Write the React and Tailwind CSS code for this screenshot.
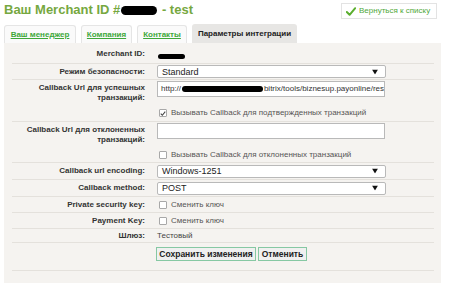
import React from 'react';

const Blob = ({ className }) => (
  <span className={`inline-block bg-black rounded-full ${className}`} />
);

const Arrow = () => (
  <svg width="6" height="5" viewBox="0 0 6 5" className="absolute right-[7px] top-1/2 -translate-y-1/2">
    <path d="M0 0 L6 0 L3 5 Z" fill="#111" />
  </svg>
);

const Select = ({ value }) => (
  <div className="relative w-[229px] h-[13px] bg-white border border-[#b9b9b9] rounded-[2px] pl-[4px] flex items-center text-[9px] leading-[10px] text-[#222]">
    {value}
    <Arrow />
  </div>
);

const Check = ({ checked, label }) => (
  <div className="flex items-center gap-[4px] pl-[2px] text-[8px] leading-[10px] text-[#555]">
    <span className="w-[8px] h-[8px] border border-[#a8a8a8] rounded-[1px] bg-white flex items-center justify-center">
      {checked && (
        <svg width="7" height="7" viewBox="0 0 8 8">
          <path d="M1 4.2 L3.1 6.3 L7 1.5" stroke="#444" strokeWidth="1.4" fill="none" />
        </svg>
      )}
    </span>
    <span>{label}</span>
  </div>
);

const Row = ({ label, h, children, align = 'items-center', pad = '' }) => (
  <div className={`grid grid-cols-[133px_1fr] gap-x-[12px] border-b border-[#e4e1dc] leading-[10px] ${h} ${align}`}>
    <div className={`text-right text-[8px] font-bold text-[#333] leading-[10px] ${pad}`}>{label}</div>
    <div className={align === 'items-start' ? 'pt-[1px]' : ''}>{children}</div>
  </div>
);

const tabs = [
  { name: 'Ваш менеджер', w: 'w-[72px]' },
  { name: 'Компания', w: 'w-[51px]' },
  { name: 'Контакты', w: 'w-[50px]' },
];

export default function App() {
  return (
    <div className="w-[450px] h-[293px] bg-white overflow-hidden font-['Liberation_Sans',Arial,sans-serif]">
      <div className="flex justify-between items-start h-[24px] pl-[4px] pr-[13px]">
        <h1 className="text-[13px] font-bold text-[#76a83f] leading-[16px] pt-[2px] flex items-center">
          Ваш Merchant ID #
          <Blob className="w-[36px] h-[9px] mx-[1px]" />
          &nbsp;- test
        </h1>
        <div className="mt-[3px] w-[96px] h-[16px] bg-white border border-[#e3e3e3] flex items-center gap-[3px] pl-[4px] text-[8px] text-[#4fa83a]">
          <svg width="10" height="9" viewBox="0 0 10 9">
            <path d="M0.8 5 L3.6 7.8 L9.2 1.2" stroke="#5aae2e" strokeWidth="2" fill="none" strokeLinecap="round" strokeLinejoin="round" />
          </svg>
          Вернуться к списку
        </div>
      </div>

      <div className="flex gap-[5px] pl-[4px] h-[19px] items-end">
        {tabs.map(t => (
          <div key={t.name} className={`${t.w} h-[18px] bg-[#fafafa] border border-b-0 border-[#e5e5e5] rounded-t-[3px] flex items-center justify-center text-[8px] font-bold text-[#3ea83a] underline`}>
            {t.name}
          </div>
        ))}
        <div className="w-[105px] h-[19px] bg-[#e7e6e4] rounded-t-[3px] flex items-center justify-center text-[8px] font-bold text-[#222]">
          Параметры интеграции
        </div>
      </div>

      <div className="ml-[4px] w-[437px] h-[240px] bg-[#f5f3f0] pt-[2px] pl-[8px] pr-[7px]">
        <Row label="Merchant ID:" h="h-[19px]">
          <Blob className="w-[27px] h-[5px] ml-[1px] mt-[1px]" />
        </Row>
        <Row label="Режим безопасности:" h="h-[16px]">
          <Select value="Standard" />
        </Row>
        <Row label={<>Callback Url для успешных<br />транзакций:</>} h="h-[42px]" align="items-start" pad="pt-[3px]">
          <div className="w-[228px] h-[16px] bg-white border border-[#b9b9b9] pl-[3px] flex items-center text-[8px] text-[#333] overflow-hidden whitespace-nowrap">
            http://
            <Blob className="w-[84px] h-[6px] rounded-[2px] mx-[1px]" />
            bitrix/tools/biznesup.payonline/res
          </div>
          <div className="mt-[11px]">
            <Check checked label="Вызывать Callback для подтвержденных транзакций" />
          </div>
        </Row>
        <Row label={<>Callback Url для отклоненных<br />транзакций:</>} h="h-[41px]" align="items-start" pad="pt-[3px]">
          <div className="w-[228px] h-[16px] bg-white border border-[#b9b9b9]" />
          <div className="mt-[11px]">
            <Check label="Вызывать Callback для отклоненных транзакций" />
          </div>
        </Row>
        <Row label="Callback url encoding:" h="h-[17px]">
          <Select value="Windows-1251" />
        </Row>
        <Row label="Callback method:" h="h-[17px]">
          <Select value="POST" />
        </Row>
        <Row label="Private security key:" h="h-[16px]">
          <Check label="Сменить ключ" />
        </Row>
        <Row label="Payment Key:" h="h-[16px]">
          <Check label="Сменить ключ" />
        </Row>
        <Row label="Шлюз:" h="h-[14px]">
          <div className="text-[8px] leading-[10px] text-[#444]">Тестовый</div>
        </Row>
        <Row label="" h="h-[28px]" align="items-start">
          <div className="flex gap-[2px] -ml-[1px] pt-[3px]">
            <button className="w-[100px] h-[14px] bg-[#f0f0f0] border border-[#86c8a3] text-[8.5px] font-bold text-[#222] leading-none">
              Сохранить изменения
            </button>
            <button className="w-[49px] h-[14px] bg-[#f0f0f0] border border-[#86c8a3] text-[8.5px] font-bold text-[#222] leading-none">
              Отменить
            </button>
          </div>
        </Row>
      </div>
    </div>
  );
}
